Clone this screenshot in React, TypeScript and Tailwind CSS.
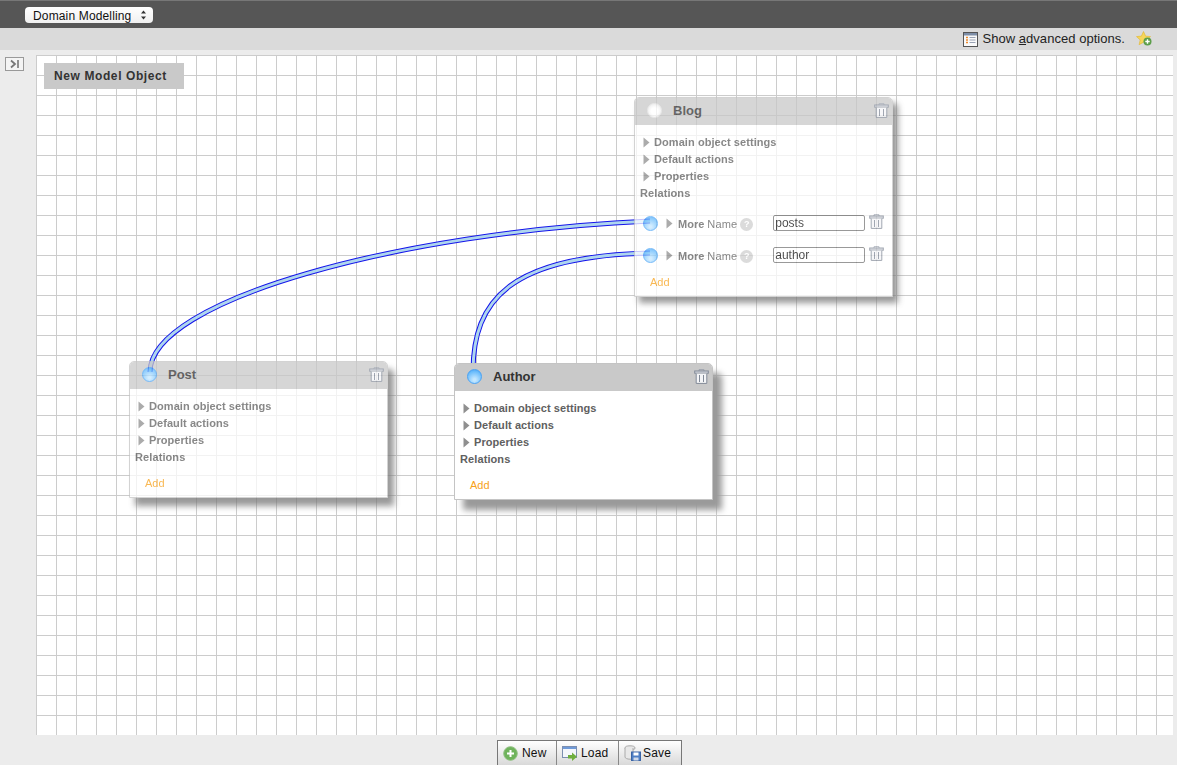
import type { ReactNode } from 'react';

function TrashIcon({ className }: { className?: string }) {
  return (
    <svg className={className} width="15" height="15" viewBox="0 0 15 15" fill="none">
      <path d="M5 2V0.7h5V2" stroke="#9aa1ad" strokeWidth="1" />
      <rect x="0.7" y="2" width="13.6" height="2.2" fill="#d5d8de" stroke="#828a98" strokeWidth="1" />
      <path d="M2.2 4.6V14.4H12.8V4.6" fill="#f4f5f7" stroke="#828a98" strokeWidth="1" />
      <path d="M5.5 6v7M9.5 6v7" stroke="#828a98" strokeWidth="1" />
    </svg>
  );
}

function Arrow() {
  return (
    <svg width="7" height="11" viewBox="0 0 7 11" className="shrink-0">
      <path d="M0.5 0.5L6.5 5.5L0.5 10.5Z" fill="#8f8f8f" />
    </svg>
  );
}

function Terminal({ muted }: { muted?: boolean }) {
  return (
    <span
      className={
        muted
          ? 'block h-[15px] w-[15px] rounded-full border border-[#e2e2e2] bg-[radial-gradient(circle_at_50%_55%,#ffffff_35%,#dedede_100%)]'
          : 'block h-[15px] w-[15px] rounded-full border border-[#4aa3f5] bg-[radial-gradient(circle_at_50%_75%,#c4e7ff_10%,#6abcfc_70%,#3f9cf0_100%)]'
      }
    />
  );
}

function SettingRow({ label }: { label: string }) {
  return (
    <div className="flex h-[17px] items-center pl-2">
      <Arrow />
      <span className="ml-1 tracking-[0.07px]">{label}</span>
    </div>
  );
}

function RelationRow({ name }: { name: string }) {
  return (
    <div className="flex h-8 items-center pl-2">
      <Terminal />
      <span className="ml-2">
        <Arrow />
      </span>
      <span className="ml-[5px] mt-[3px]">More</span>
      <span className="ml-[3px] mt-[3px] font-normal tracking-[0.15px]">Name</span>
      <span className="ml-[3px] mt-[3px] flex h-[13px] w-[13px] items-center justify-center rounded-full bg-[#cfcfcf] text-[9px] text-white">
        ?
      </span>
      <input
        defaultValue={name}
        className="ml-5 h-4 w-[92px] rounded-[2px] border border-[#777] bg-white/80 px-px text-[12px] font-normal text-[#111] outline-none"
      />
      <TrashIcon className="mb-[3px] ml-1" />
    </div>
  );
}

function ModelCard({
  name,
  className,
  dimmed,
  muted,
  relations = [],
}: {
  name: string;
  className: string;
  dimmed?: boolean;
  muted?: boolean;
  relations?: string[];
}) {
  return (
    <div
      className={`absolute w-[259px] rounded-t-[5px] border border-[#c4c4c4] bg-white text-[11px] font-bold text-[#606060] ${
        dimmed ? 'opacity-75' : ''
      } ${className}`}
    >
      <div className="flex h-[27px] items-center rounded-t-[4px] bg-[#c9c9c9] pb-[2px] pl-[10px] pr-[3px]">
        <span className="mb-px flex w-[18px] justify-center">
          <Terminal muted={muted} />
        </span>
        <span className="ml-[10px] flex-1 text-[13px] text-[#333]">{name}</span>
        <TrashIcon className="mb-px" />
      </div>
      <div className="pb-[5px] pt-[9px]">
        <SettingRow label="Domain object settings" />
        <SettingRow label="Default actions" />
        <SettingRow label="Properties" />
        <div className="flex h-[17px] items-center pl-[5px] tracking-[0.1px]">Relations</div>
        {relations.length > 0 ? (
          <div className="mb-[3px] mt-[5px]">
            {relations.map(r => (
              <RelationRow key={r} name={r} />
            ))}
          </div>
        ) : (
          <div className="h-[9px]" />
        )}
        <div className="flex h-[17px] items-center pl-[15px] font-normal text-[#f7a11a]">Add</div>
      </div>
    </div>
  );
}

function Wire({ d }: { d: string }) {
  return (
    <>
      <path d={d} fill="none" stroke="#1414ea" strokeWidth="5" />
      <path d={d} fill="none" stroke="#aed6ee" strokeWidth="3" />
    </>
  );
}

function ToolButton({ icon, label, className }: { icon: ReactNode; label: string; className: string }) {
  return (
    <button className={`flex h-full items-center pl-[5px] text-[12px] tracking-[0.15px] text-[#111] ${className}`}>
      {icon}
      <span>{label}</span>
    </button>
  );
}

export default function App() {
  return (
    <div className="flex h-[765px] w-full flex-col overflow-hidden bg-[#ececec] font-['Liberation_Sans',Arial,sans-serif]">
      {/* top bar */}
      <div className="flex h-7 shrink-0 items-center border-t border-[#777] bg-[#565656] pl-[25px]">
        <div className="relative h-4 w-[128px]">
          <select className="block h-full w-full appearance-none rounded-[4px] bg-[linear-gradient(#ffffff,#f0f0f0)] pl-2 text-[12px] tracking-[0.15px] text-[#111] outline-none">
            <option>Domain Modelling</option>
          </select>
          <svg className="pointer-events-none absolute right-[6px] top-[3px]" width="7" height="10" viewBox="0 0 7 10">
            <path d="M3.5 0.5L6 3.5H1ZM3.5 9.5L1 6.5H6Z" fill="#333" />
          </svg>
        </div>
      </div>

      {/* options bar */}
      <div className="flex h-[22px] shrink-0 items-center justify-end bg-[#dadada] pr-[24px] text-[13px] text-[#222]">
        <svg width="15" height="15" viewBox="0 0 15 15">
          <rect x="0.5" y="0.5" width="14" height="14" fill="#fafafa" stroke="#555" />
          <rect x="1" y="1" width="13" height="2.5" fill="#7d8ea8" />
          <path d="M3 5.5h2M3 8h2M3 10.5h2" stroke="#ef8a2c" strokeWidth="1.4" />
          <path d="M6.5 5.5h6M6.5 8h6M6.5 10.5h6" stroke="#9aa3b5" strokeWidth="1.2" />
        </svg>
        <span className="ml-1 tracking-[0.04px]">
          Show <span className="underline">a</span>dvanced options.
        </span>
        <svg className="ml-[11px]" width="17" height="16" viewBox="0 0 17 16">
          <path d="M7.5 0.5L9.6 5.1L14.5 5.6L10.8 8.9L11.9 13.7L7.5 11.2L3.1 13.7L4.2 8.9L0.5 5.6L5.4 5.1Z" fill="#f5d65a" stroke="#e3b52c" strokeWidth="0.6" />
          <circle cx="11.5" cy="10.5" r="4" fill="#5c9e4a" />
          <path d="M11.5 8.3v4.4M9.3 10.5h4.4" stroke="#fff" strokeWidth="1.4" />
        </svg>
      </div>

      {/* main */}
      <div className="flex min-h-0 flex-1">
        <div className="w-9 shrink-0 pl-[5px] pt-[7px]">
          <svg width="19" height="14" viewBox="0 0 19 14">
            <rect x="0.5" y="0.5" width="18" height="13" fill="#f4f4f4" stroke="#999" />
            <path d="M6 3.5L10 7L6 10.5" fill="none" stroke="#777" strokeWidth="1.8" />
            <path d="M13 3v8" stroke="#777" strokeWidth="1.6" />
          </svg>
        </div>
        <div className="relative mr-1 mt-[5px] flex-1 overflow-hidden bg-white bg-[linear-gradient(to_right,#cccccc_1px,transparent_1px),linear-gradient(to_bottom,#cccccc_1px,transparent_1px)] bg-[size:20px_20px]">
          <div className="absolute left-2 top-2 flex h-[26px] w-[140px] items-center bg-[#c9c9c9] pl-[10px] text-[12px] font-bold tracking-[0.6px] text-[#333]">
            New Model Object
          </div>

          <svg className="pointer-events-none absolute inset-0 h-full w-full">
            <Wire d="M614 166 C 364 177, 114 245, 114 317" />
            <Wire d="M614 198 C 474 201, 437 245, 437 317" />
          </svg>

          <ModelCard name="Blog" className="left-[598px] top-[42px] shadow-[5px_6px_6px_#777]" dimmed muted relations={['posts', 'author']} />
          <ModelCard name="Post" className="left-[93px] top-[306px] shadow-[6px_8px_6px_#777]" dimmed />
          <ModelCard name="Author" className="left-[418px] top-[308px] shadow-[9px_10px_6px_#9a9a9a]" />
        </div>
      </div>

      {/* bottom toolbar */}
      <div className="flex h-[30px] shrink-0 items-end justify-center pl-[2px]">
        <div className="flex h-[25px] divide-x divide-[#888] border border-b-0 border-[#777] bg-[linear-gradient(#ffffff,#d9d9d9)]">
          <ToolButton
            className="w-[59px]"
            label="New"
            icon={
              <svg className="mr-1" width="15" height="15" viewBox="0 0 15 15">
                <circle cx="7.5" cy="7.5" r="6.8" fill="#6fb35c" stroke="#8fbf80" />
                <path d="M7.5 4v7M4 7.5h7" stroke="#fff" strokeWidth="2" />
              </svg>
            }
          />
          <ToolButton
            className="w-[62px]"
            label="Load"
            icon={
              <svg className="mr-[3px]" width="16" height="16" viewBox="0 0 16 16">
                <rect x="0.5" y="1.5" width="14" height="11" fill="#f4f6fb" stroke="#7c8fb0" />
                <rect x="1" y="2" width="13" height="2" fill="#6f9ad8" />
                <path d="M6 10h4V7.5l5 4.2-5 4.2v-2.5H6Z" fill="#6fae3f" />
              </svg>
            }
          />
          <ToolButton
            className="w-[62px]"
            label="Save"
            icon={
              <svg className="mr-[2px]" width="17" height="16" viewBox="0 0 17 16">
                <ellipse cx="6" cy="3" rx="5" ry="2.2" fill="#e8e8e8" stroke="#aaa" />
                <path d="M1 3v9c0 1.2 2.2 2.2 5 2.2h3V3" fill="#e8e8e8" stroke="#aaa" />
                <rect x="7.5" y="7" width="9" height="8.5" fill="#4f7fc4" stroke="#3a64a5" />
                <rect x="9.5" y="7.5" width="5" height="3" fill="#fff" />
                <rect x="9.5" y="12.5" width="5" height="3" fill="#cfd9ea" />
              </svg>
            }
          />
        </div>
      </div>
    </div>
  );
}
